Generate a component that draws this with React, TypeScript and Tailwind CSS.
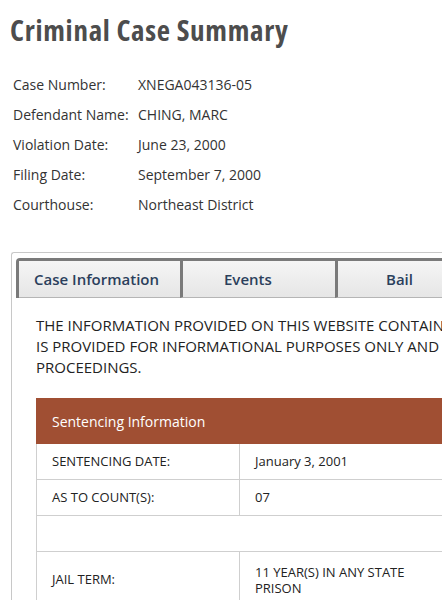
import React from 'react';

const caseDetails = [
  { label: 'Case Number:', value: 'XNEGA043136-05' },
  { label: 'Defendant Name:', value: 'CHING, MARC' },
  { label: 'Violation Date:', value: 'June 23, 2000' },
  { label: 'Filing Date:', value: 'September 7, 2000' },
  { label: 'Courthouse:', value: 'Northeast District' },
];

const App = () => {
  return (
    <div className="w-[442px] h-[600px] overflow-hidden bg-white font-['Open_Sans',sans-serif] text-[#333]">
      <h1 className="pl-[10px] pt-[10px] text-[29px] leading-[40px] font-bold text-[#4d4d4d] tracking-[0.7px] [font-stretch:condensed]">
        Criminal Case Summary
      </h1>

      {/* Detalle del caso */}
      <div className="pl-[13px] pt-[19px] text-[14px]">
        {caseDetails.map((row) => (
          <div key={row.label} className="flex h-[30px] items-center">
            <span className="w-[125px]">{row.label}</span>
            <span>{row.value}</span>
          </div>
        ))}
      </div>

      {/* Tabs */}
      <div className="ml-[11px] mt-[33px] w-[600px] border-l border-t border-[#c8c8c8] rounded-tl-[3px] pt-[4px] pl-[4px]">
        <div className="flex border-t-[3px] border-l-[3px] border-[#7a7a7a] rounded-tl-[4px] mt-[1px]">
          <div className="w-[161px] h-[37px] flex items-center pl-[15px] bg-gradient-to-b from-[#f5f5f5] to-[#e6e6e6] border-b border-[#b5b5b5] text-[15px] font-semibold text-[#2b3f5c]">
            Case Information
          </div>
          <div className="w-[155px] h-[37px] flex items-center pl-[41px] border-l-[3px] border-[#7a7a7a] bg-gradient-to-b from-[#f5f5f5] to-[#e6e6e6] border-b-[#b5b5b5] border-b text-[15px] font-semibold text-[#2b3f5c]">
            Events
          </div>
          <div className="w-[200px] h-[37px] flex items-center pl-[48px] border-l-[3px] border-[#7a7a7a] bg-gradient-to-b from-[#f5f5f5] to-[#e6e6e6] border-b-[#b5b5b5] border-b text-[15px] font-semibold text-[#2b3f5c]">
            Bail
          </div>
        </div>

        <div className="pl-[20px] pt-[17px] text-[15px] leading-[21px] text-[#222]">
          <p className="whitespace-nowrap">
            THE INFORMATION PROVIDED ON THIS WEBSITE CONTAINS DATA
            <br />
            IS PROVIDED FOR INFORMATIONAL PURPOSES ONLY AND IS NOT
            <br />
            PROCEEDINGS.
          </p>

          {/* Sentencing */}
          <div className="mt-[20px] w-[560px] text-[13px]">
            <div className="h-[46px] flex items-center pl-[16px] bg-[#a04f33] text-white text-[14px]">
              Sentencing Information
            </div>
            <div className="flex h-[36px] border-x border-b border-[#cfcfcf]">
              <div className="w-[203px] flex items-center pl-[15px] border-r border-[#cfcfcf]">SENTENCING DATE:</div>
              <div className="flex items-center pl-[15px]">January 3, 2001</div>
            </div>
            <div className="flex h-[36px] border-x border-b border-[#cfcfcf]">
              <div className="w-[203px] flex items-center pl-[15px] border-r border-[#cfcfcf]">AS TO COUNT(S):</div>
              <div className="flex items-center pl-[15px]">07</div>
            </div>
            <div className="h-[36px] border-x border-b border-[#cfcfcf]" />
            <div className="flex h-[56px] border-x border-b border-[#cfcfcf]">
              <div className="w-[203px] flex items-center pl-[15px] border-r border-[#cfcfcf]">JAIL TERM:</div>
              <div className="flex items-center pl-[15px] w-[190px] leading-[16px]">11 YEAR(S) IN ANY STATE PRISON</div>
            </div>
          </div>
        </div>
      </div>
    </div>
  );
};

export default App;
